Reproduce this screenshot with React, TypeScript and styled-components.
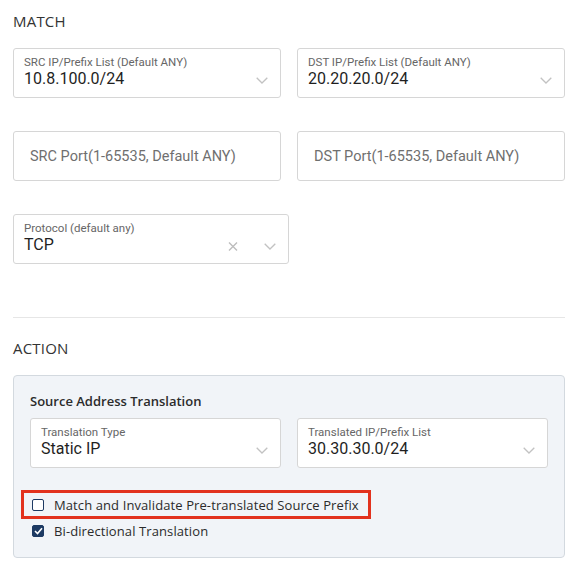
import React from "react";
import styled, { createGlobalStyle } from "styled-components";

const Global = createGlobalStyle`
  html, body { margin: 0; padding: 0; background: #ffffff; }
  body { font-family: Roboto, "Noto Sans", sans-serif; color: #222; }
  * { box-sizing: border-box; }
`;

const Page = styled.div`
  width: 578px;
  padding: 11px 13px 0;
`;

const SectionTitle = styled.div`
  font-family: "Open Sans", "Noto Sans", sans-serif;
  font-size: 15px;
  line-height: 20px;
  font-weight: 500;
  color: #333;
  letter-spacing: 0.2px;
`;

const Grid = styled.div<{ $top: number }>`
  display: grid;
  grid-template-columns: 1fr 1fr;
  column-gap: 16px;
  row-gap: 33px;
  margin-top: ${(p) => p.$top}px;
`;

const HalfRow = styled.div`
  width: 50%;
  margin-top: 33px;
`;

const Box = styled.div`
  height: 50px;
  border: 1px solid #d6d6d6;
  border-radius: 3px;
  background: #fff;
  display: flex;
  align-items: center;
`;

const SelectBox = styled(Box)`
  align-items: stretch;
  padding: 7px 12px 0 10px;
`;

const SelectText = styled.div`
  flex: 1;
  min-width: 0;
  display: flex;
  flex-direction: column;
`;

const Label = styled.div`
  font-size: 11.5px;
  line-height: 13px;
  color: #666;
`;

const Value = styled.div`
  font-size: 16px;
  line-height: 19px;
  color: #1f1f1f;
`;

const Icons = styled.div`
  display: flex;
  align-items: center;
  gap: 26px;
  padding-top: 12px;
  height: 36px;
`;

const Placeholder = styled.div`
  padding-left: 16px;
  font-size: 14.5px;
  color: #6f6f6f;
`;

const Divider = styled.hr`
  border: none;
  border-top: 1px solid #e6e6e6;
  margin: 53px 0 0;
  height: 0;
`;

const ActionTitle = styled(SectionTitle)`
  margin-top: 20px;
`;

const Panel = styled.div`
  margin-top: 17px;
  border: 1px solid #d3d9df;
  border-radius: 4px;
  background: #f1f4f8;
  padding: 16px 16px 15px;
`;

const PanelTitle = styled.div`
  font-family: "Open Sans", "Noto Sans", sans-serif;
  font-size: 13px;
  line-height: 18px;
  font-weight: 600;
  color: #2b2b2b;
`;

const Highlight = styled.div`
  display: inline-flex;
  margin: 22px 0 0 -9px;
  border: 3px solid #e2321e;
  padding: 0 9px 0 8px;
`;

const CheckRow = styled.div`
  display: flex;
  align-items: center;
  gap: 10px;
  height: 23px;
`;

const CheckBox = styled.span<{ $checked?: boolean }>`
  width: 12px;
  height: 12px;
  border-radius: 2px;
  border: 1.5px solid #1d3a63;
  background: ${(p) => (p.$checked ? "#1d3a63" : "#fff")};
  display: inline-flex;
  align-items: center;
  justify-content: center;
  flex: none;
`;

const CheckLabel = styled.span`
  font-family: "Open Sans", "Noto Sans", sans-serif;
  font-size: 13px;
  letter-spacing: 0.1px;
  color: #2b2b2b;
`;

const SecondRow = styled(CheckRow)`
  margin-left: 2px;
  margin-top: 0;
`;

const Chevron = () => (
  <svg width="12" height="7" viewBox="0 0 12 7" fill="none">
    <path d="M0.7 0.7L6 6L11.3 0.7" stroke="#c2c2c2" strokeWidth="1.3" />
  </svg>
);

const Cross = () => (
  <svg width="10" height="9" viewBox="0 0 10 9" fill="none">
    <path d="M1 0.5L9 8.5M9 0.5L1 8.5" stroke="#bdbdbd" strokeWidth="1.4" />
  </svg>
);

const Check = () => (
  <svg width="9" height="8" viewBox="0 0 9 8" fill="none">
    <path d="M1 4L3.5 6.5L8 1.2" stroke="#fff" strokeWidth="1.6" />
  </svg>
);

type SelectProps = { label: string; value: string; clearable?: boolean };

const Select = ({ label, value, clearable }: SelectProps) => (
  <SelectBox>
    <SelectText>
      <Label>{label}</Label>
      <Value>{value}</Value>
    </SelectText>
    <Icons>
      {clearable && <Cross />}
      <Chevron />
    </Icons>
  </SelectBox>
);

const PortInput = ({ text }: { text: string }) => (
  <Box>
    <Placeholder>{text}</Placeholder>
  </Box>
);

export default function App() {
  return (
    <>
      <Global />
      <Page>
        <SectionTitle>MATCH</SectionTitle>
        <Grid $top={17}>
          <Select label="SRC IP/Prefix List (Default ANY)" value="10.8.100.0/24" />
          <Select label="DST IP/Prefix List (Default ANY)" value="20.20.20.0/24" />
          <PortInput text="SRC Port(1-65535, Default ANY)" />
          <PortInput text="DST Port(1-65535, Default ANY)" />
        </Grid>
        <HalfRow>
          <Select label="Protocol (default any)" value="TCP" clearable />
        </HalfRow>
        <Divider />
        <ActionTitle>ACTION</ActionTitle>
        <Panel>
          <PanelTitle>Source Address Translation</PanelTitle>
          <Grid $top={8}>
            <Select label="Translation Type" value="Static IP" />
            <Select label="Translated IP/Prefix List" value="30.30.30.0/24" />
          </Grid>
          <Highlight>
            <CheckRow>
              <CheckBox />
              <CheckLabel>Match and Invalidate Pre-translated Source Prefix</CheckLabel>
            </CheckRow>
          </Highlight>
          <SecondRow>
            <CheckBox $checked>
              <Check />
            </CheckBox>
            <CheckLabel>Bi-directional Translation</CheckLabel>
          </SecondRow>
        </Panel>
      </Page>
    </>
  );
}
